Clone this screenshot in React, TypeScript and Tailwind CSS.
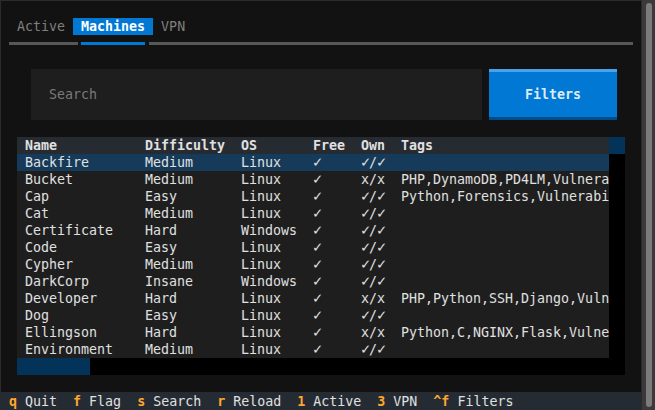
import React from "react";

const rows: [string, string, string, string, string, string][] = [
  ["Backfire", "Medium", "Linux", "✓", "✓/✓", ""],
  ["Bucket", "Medium", "Linux", "✓", "x/x", "PHP,DynamoDB,PD4LM,Vulnerability Assessment"],
  ["Cap", "Easy", "Linux", "✓", "✓/✓", "Python,Forensics,Vulnerability Assessment"],
  ["Cat", "Medium", "Linux", "✓", "✓/✓", ""],
  ["Certificate", "Hard", "Windows", "✓", "✓/✓", ""],
  ["Code", "Easy", "Linux", "✓", "✓/✓", ""],
  ["Cypher", "Medium", "Linux", "✓", "✓/✓", ""],
  ["DarkCorp", "Insane", "Windows", "✓", "✓/✓", ""],
  ["Developer", "Hard", "Linux", "✓", "x/x", "PHP,Python,SSH,Django,Vulnerability Assessment"],
  ["Dog", "Easy", "Linux", "✓", "✓/✓", ""],
  ["Ellingson", "Hard", "Linux", "✓", "x/x", "Python,C,NGINX,Flask,Vulnerability Assessment"],
  ["Environment", "Medium", "Linux", "✓", "✓/✓", ""],
];

function Glyphs({ text }: { text: string }) {
  return (
    <>
      {text.split("").map((ch, i) =>
        ch === "✓" ? (
          <span key={i} className="inline-block w-[8px] text-[15px] leading-[17px] align-top">
            ✓
          </span>
        ) : (
          <span key={i}>{ch}</span>
        )
      )}
    </>
  );
}

function Row({ cells, className }: { cells: string[]; className: string }) {
  return (
    <div className={"flex h-[17px] whitespace-pre overflow-hidden " + className}>
      <div className="w-[120px] shrink-0 pl-[8px]">{cells[0]}</div>
      <div className="w-[96px] shrink-0 pl-[8px]">{cells[1]}</div>
      <div className="w-[72px] shrink-0 pl-[8px]">{cells[2]}</div>
      <div className="w-[48px] shrink-0 pl-[8px]">
        <Glyphs text={cells[3]} />
      </div>
      <div className="w-[40px] shrink-0 pl-[8px]">
        <Glyphs text={cells[4]} />
      </div>
      <div className="w-[216px] shrink-0 pl-[8px] overflow-hidden">{cells[5]}</div>
    </div>
  );
}

export default function App() {
  return (
    <div
      className="w-[655px] h-[410px] bg-[#121212] flex text-[13.3px] leading-[17px] text-[#e0e0e0] overflow-hidden"
      style={{ fontFamily: "'DejaVu Sans Mono', monospace" }}
    >
      <div className="w-[641px] h-[410px] shrink-0 border-l border-t border-[#2b2b2f] flex flex-col">
        <div className="h-[17px] shrink-0" />
        {/* Tabs */}
        <div className="h-[17px] shrink-0 flex whitespace-pre pl-[8px]">
          <span className="text-[#7f7f7f]"> Active </span>
          <span className="bg-[#0178d4] text-white font-bold"> Machines </span>
          <span className="text-[#7f7f7f]"> VPN </span>
        </div>
        {/* Underline */}
        <div className="h-[17px] shrink-0 flex items-center">
          <div className="ml-[8px] w-[69px] h-[3px] bg-[#575757]" />
          <div className="ml-[3px] w-[64px] h-[3px] bg-[#0178d4]" />
          <div className="ml-[4px] w-[484px] h-[3px] bg-[#575757]" />
        </div>
        <div className="h-[17px] shrink-0" />
        {/* Search + Filters */}
        <div className="h-[51px] shrink-0 flex">
          <div className="ml-[30px] w-[451px] h-[51px] bg-[#1e1e1e] flex items-center pl-[18px] text-[#7a7a7a]">
            Search
          </div>
          <div className="ml-[7px] w-[128px] h-[51px] bg-[#0178d4] border-t-[3px] border-t-[#4aa3ea] border-b-[3px] border-b-[#014d8c] flex items-center justify-center font-bold text-[#dcebf7]">
            Filters
          </div>
        </div>
        <div className="h-[17px] shrink-0" />
        {/* Table */}
        <div className="ml-[16px] w-[608px] flex flex-col shrink-0">
          <div className="flex">
            <div className="w-[592px] flex flex-col bg-[#1e1e1e]">
              <Row
                cells={["Name", "Difficulty", "OS", "Free", "Own", "Tags"]}
                className="bg-[#262b31] font-bold"
              />
              {rows.map((r, i) => (
                <Row key={r[0]} cells={r} className={i === 0 ? "bg-[#163a5a]" : ""} />
              ))}
            </div>
            <div className="w-[16px] flex flex-col bg-black">
              <div className="h-[17px] bg-[#04335a]" />
            </div>
          </div>
          <div className="h-[17px] flex bg-black">
            <div className="w-[73px] h-[17px] bg-[#04335a]" />
          </div>
        </div>
        <div className="h-[17px] shrink-0" />
        {/* Footer */}
        <div className="flex-1 bg-[#252b33] whitespace-pre pt-[1px]">
          <span className="text-[#ffa62b] font-bold"> q</span>
          <span> Quit </span>
          <span className="text-[#ffa62b] font-bold"> f</span>
          <span> Flag </span>
          <span className="text-[#ffa62b] font-bold"> s</span>
          <span> Search </span>
          <span className="text-[#ffa62b] font-bold"> r</span>
          <span> Reload </span>
          <span className="text-[#ffa62b] font-bold"> 1</span>
          <span> Active </span>
          <span className="text-[#ffa62b] font-bold"> 3</span>
          <span> VPN </span>
          <span className="text-[#ffa62b] font-bold"> ^f</span>
          <span> Filters </span>
        </div>
      </div>
      {/* Window scrollbar */}
      <div className="w-[14px] h-[410px] shrink-0 bg-[#3a3a3a] border-l border-[#2a2a2a] pt-[3px] pb-[3px] pl-[4px] pr-[3px]">
        <div className="w-[6px] h-full rounded-[3px] bg-[#7c7c7c]" />
      </div>
    </div>
  );
}
